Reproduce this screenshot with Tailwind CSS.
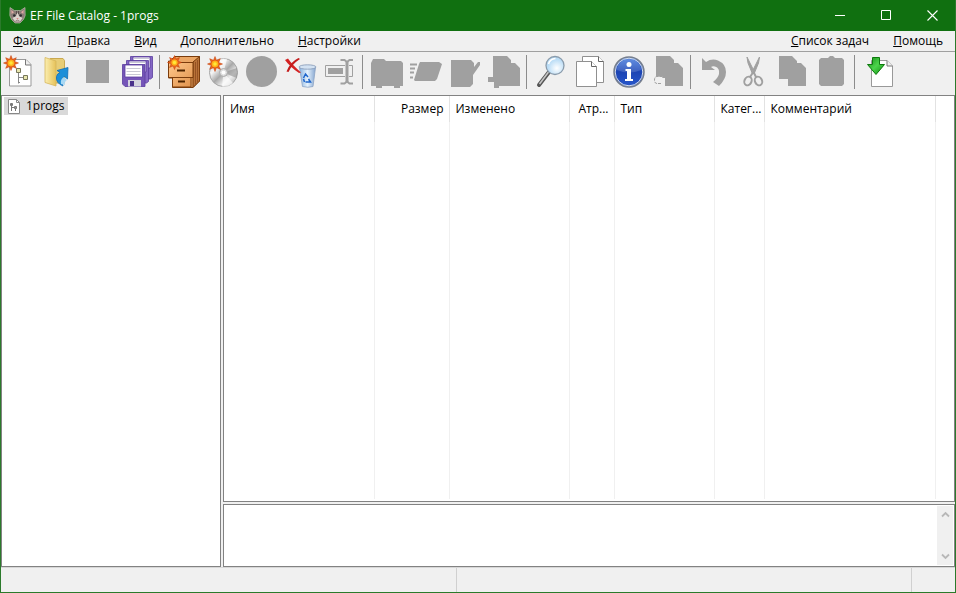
<!DOCTYPE html>
<html lang="ru">
<head>
    <meta charset="UTF-8">
    <meta name="viewport" content="width=device-width, initial-scale=1.0">
    <title>EF File Catalog - 1progs</title>
    <script src="https://cdn.jsdelivr.net/npm/@tailwindcss/browser@4"></script>
</head>
<body class="flex h-screen flex-col overflow-hidden border-x border-b border-[#2b7a2b] bg-[#f0f0f0] font-['Open_Sans','Noto_Sans',sans-serif] text-[12px] leading-4 text-black">

    <!-- shared shapes -->
    <svg class="absolute size-0" aria-hidden="true">
        <defs>
            <symbol id="burst" viewBox="-8 -8 16 16">
                <path d="M0-7.5 1.5-3.7 5.3-5.3 3.7-1.5 7.5 0 3.7 1.5 5.3 5.3 1.5 3.7 0 7.5-1.5 3.7-5.3 5.3-3.7 1.5-7.5 0-3.7-1.5-5.3-5.3-1.5-3.7Z" fill="#e8641a" stroke="#c43c0c" stroke-width=".5"/>
                <circle r="3.3" fill="#ffb31a"/>
                <circle r="1.8" fill="#ffe83a"/>
            </symbol>
            <linearGradient id="folder" x1="0" x2="1">
                <stop offset="0" stop-color="#fbeeb0"/><stop offset="1" stop-color="#e6c259"/>
            </linearGradient>
            <linearGradient id="wood" x1="0" y1="0" x2="1" y2="1">
                <stop offset="0" stop-color="#ffc88c"/><stop offset="1" stop-color="#e0924c"/>
            </linearGradient>
            <linearGradient id="disc" x1="0" y1="0" x2="1" y2="1">
                <stop offset="0" stop-color="#bcbcbc"/><stop offset=".3" stop-color="#f5f5f5"/><stop offset=".5" stop-color="#a8a8a8"/><stop offset=".7" stop-color="#f0f0f0"/><stop offset="1" stop-color="#a0a0a0"/>
            </linearGradient>
            <linearGradient id="info" x1="0" y1="0" x2="0" y2="1">
                <stop offset="0" stop-color="#4a80e0"/><stop offset=".5" stop-color="#1c44b4"/><stop offset="1" stop-color="#2858cc"/>
            </linearGradient>
            <linearGradient id="green" x1="0" y1="0" x2="1" y2="1">
                <stop offset="0" stop-color="#168a16"/><stop offset=".5" stop-color="#4cd44c"/><stop offset="1" stop-color="#0c8c0c"/>
            </linearGradient>
            <linearGradient id="bin" x1="0" x2="1">
                <stop offset="0" stop-color="#8bb4e0"/><stop offset=".5" stop-color="#e4f1fc"/><stop offset="1" stop-color="#86a6d0"/>
            </linearGradient>
            <radialGradient id="lens" cx=".6" cy=".65">
                <stop offset="0" stop-color="#ffffff"/><stop offset="1" stop-color="#b9dcf6"/>
            </radialGradient>
        </defs>
    </svg>

    <header class="-mx-px flex h-[31px] shrink-0 items-center bg-[#107010] pr-px pl-[9px] text-white">
        <svg class="mr-1 size-[17px]" viewBox="0 0 17 17" aria-hidden="true">
            <path d="M1 .5 5.500 3.500h6L16 .5l.2 8-1.700 4-3.500 3.500H6l-3.500-3.500L.8 8.500Z" fill="#8b7d77" stroke="#c9c2ba" stroke-width=".6"/>
            <path d="M2.300 3 5 5.300 2.600 7ZM14.700 3 12 5.300 14.400 7Z" fill="#e2a9a5"/>
            <path d="M8.500 5.500 10 9l3.500 2-2.500 3.500H6L3.500 11 7 9Z" fill="#dcd3cd"/>
            <path d="M7 4h.8v3H7zM9.200 4h.8v3h-.8z" fill="#4d4542"/>
            <circle cx="5.300" cy="8.500" r="1.300" fill="#2b2b30"/><circle cx="11.700" cy="8.500" r="1.300" fill="#2b2b30"/>
            <path d="m7.300 11h2.400l-1.200 1.600Z" fill="#d9827e"/>
            <path d="M6.500 14q2-1.600 4 0" fill="none" stroke="#70605c" stroke-width=".7"/>
        </svg>
        <h1 class="flex-1">EF File Catalog - 1progs</h1>
        <button class="flex h-full w-[46px] items-center justify-center" aria-label="Свернуть">
            <svg class="size-[11px]" viewBox="0 0 11 11"><path d="M0 5.500h10" stroke="#fff"/></svg>
        </button>
        <button class="flex h-full w-[46px] items-center justify-center" aria-label="Развернуть">
            <svg class="size-[11px]" viewBox="0 0 11 11"><path d="M.5 .5h9v9h-9z" fill="none" stroke="#fff"/></svg>
        </button>
        <button class="flex h-full w-[46px] items-center justify-center" aria-label="Закрыть">
            <svg class="size-[11px]" viewBox="0 0 11 11"><path d="m.5.5 10 10m0-10-10 10" stroke="#fff" stroke-width="1.100"/></svg>
        </button>
    </header>

    <nav class="flex h-[21px] shrink-0 items-center gap-6 border-b border-[#a0a0a0] px-3">
        <button><u>Ф</u>айл</button>
        <button><u>П</u>равка</button>
        <button><u>В</u>ид</button>
        <button><u>Д</u>ополнительно</button>
        <button><u>Н</u>астройки</button>
        <button class="ml-auto"><u>С</u>писок задач</button>
        <button><u>П</u>омощь</button>
    </nav>

    <div role="toolbar" class="flex h-[43px] shrink-0 items-start">
        <button class="w-[39px]" aria-label="Новый каталог">
            <svg viewBox="0 0 39 40">
                <path d="M8.500 7.500H25l5 5v21.500H8.500Z" fill="#fff" stroke="#999"/>
                <path d="M24.500 7.500v5.500H30" fill="#eee" stroke="#777"/>
                <path d="M17.500 20v11.500M17.500 25.500H22M17.500 30.500H19" fill="none" stroke="#888"/>
                <path d="M15.500 16.500h4v4h-4zM22.500 23.500h4v4h-4z" fill="#e8e6ae" stroke="#77775a"/>
                <use href="#burst" x="2" y="3" width="16" height="16"/>
            </svg>
        </button>
        <button class="w-[39px]" aria-label="Открыть">
            <svg viewBox="0 0 39 40">
                <path d="M10 6.500h13l1.500 2V31H10Z" fill="#e8cd76" stroke="#c9a850"/>
                <path d="M5 5.500 16 9v25L5 30.500Z" fill="url(#folder)" stroke="#d5b65c" stroke-width=".8"/>
                <path d="M17 18.500 28 15.500 27.500 27 24.500 24.500Q20 27 23 34 15.500 31 16.500 24.500 17 21.500 20 20.500Z" fill="#1d8fd8" stroke="#106cb4" stroke-width=".8"/>
                <path d="M21 32q-1-5 3-7l3 3q-3 2-2 5Z" fill="#a8d8f4"/>
            </svg>
        </button>
        <button class="w-[39px]" aria-label="Закрыть каталог" disabled>
            <svg viewBox="0 0 39 40"><path d="M7 8h23v23H7z" fill="#a0a0a0"/></svg>
        </button>
        <button class="w-[39px]" aria-label="Сохранить все">
            <svg viewBox="0 0 39 40">
                <g stroke="#5a3d9e" stroke-width=".8">
                    <path d="M12.500 4.500h22v21l-2 1.500h-20Z" fill="#8467c4"/><path d="M15 5h17v11H15z" fill="#fff"/>
                    <path d="M8.500 8.500h22v21l-2 1.500h-20Z" fill="#8467c4"/><path d="M11 9h17v11H11z" fill="#fff"/>
                    <path d="M4.500 12.500h22.500v22H7l-2.500-2.500Z" fill="#7555b8"/><path d="M7 13h17.500v12H7z" fill="#fff"/>
                </g>
                <path d="M8.500 16.500h14M8.500 19.500h14M8.500 22.500h14M16 6.500h15M12 10.500h15" stroke="#c9c9d4"/>
                <path d="M10 28h13v6.500H10z" fill="#d4d4de"/><path d="M12 29h4v5h-4z" fill="#49318a"/>
            </svg>
        </button>
        <span class="mr-[5px] ml-[2px] mt-[3px] h-[34px] w-px bg-[#8c8c8c]"></span>

        <button class="w-[39px]" aria-label="Добавить том">
            <svg viewBox="0 0 39 40">
                <path d="M4.500 9 10 4.500h24.500V29L28 35.500H7.500V26h-4V9Z" fill="#eba766" stroke="#7a3c0c"/>
                <path d="m28 10 6.500-5.500V29L28 35.500Z" fill="#b87238" stroke="#7a3c0c"/>
                <path d="M7.500 25.500H26v9.500H7.500ZM3.500 10.500h24.500v15H3.500Z" fill="url(#wood)" stroke="#7a3c0c"/>
                <path d="M12 18.500h8M13 29.500h7" stroke="#4f2400" stroke-width="2"/>
                <path d="M30.500 10v22M32.500 8v22" stroke="#87451a" stroke-width=".7"/>
                <use href="#burst" x="2" y="3" width="15" height="15"/>
            </svg>
        </button>
        <button class="w-[39px]" aria-label="Добавить диск">
            <svg viewBox="0 0 39 40">
                <circle cx="19.500" cy="20.500" r="14" fill="url(#disc)" stroke="#a5a5a5"/>
                <path d="M19.500 20.500 12 8.500q5-3 11-1.500ZM19.500 20.500 29 31q-5 4.500-11 3.500Z" fill="#fff" opacity=".65"/>
                <path d="M19.500 20.500 33 16q1.500 5-.5 10Z" fill="#8f8f8f" opacity=".6"/>
                <circle cx="19.500" cy="20.500" r="4" fill="#ddd" stroke="#aaa"/><circle cx="19.500" cy="20.500" r="2" fill="#fff"/>
                <use href="#burst" x="3" y="4" width="16" height="16"/>
            </svg>
        </button>
        <button class="w-[39px]" aria-label="Остановить" disabled>
            <svg viewBox="0 0 39 40"><circle cx="18.500" cy="19.500" r="15.500" fill="#a0a0a0"/></svg>
        </button>
        <button class="w-[39px]" aria-label="Удалить">
            <svg viewBox="0 0 39 40">
                <path d="M17.500 15.500h16L31 34.500q-5 1.500-10.500 0Z" fill="url(#bin)" stroke="#8ba3c4" stroke-width=".8"/>
                <ellipse cx="25.500" cy="15" rx="8.500" ry="2.200" fill="#d3e2f2" stroke="#8296b4" stroke-width=".8"/>
                <path d="m21.500 26 2-4 2.500 3M26.500 27l2 3h-5m-2-3 1 3" fill="none" stroke="#1f66cc" stroke-width="1.500"/>
                <path d="M3 8 6 6.500q4 6 13 14L17 21Q8 15 3 8Z" fill="#d42222"/>
                <path d="M16.500 6 18 7Q10 12 6.500 20L4.500 19.500Q8 10 16.500 6Z" fill="#c41c1c"/>
            </svg>
        </button>
        <button class="w-[39px]" aria-label="Переименовать" disabled>
            <svg viewBox="0 0 39 40" fill="none" stroke="#a0a0a0">
                <path d="M24 13.500H4.500v11H24M28 13.500h3.500v11H28"/>
                <path d="M7 16h15v6H7z" fill="#a0a0a0" stroke="none"/>
                <path d="M19.500 8h4l2.500 2 2.500-2h3.500M26 9v21M19.500 31.500h4l2.500-2 2.500 2h3.500" stroke-width="2"/>
                <path d="M26 9v22" stroke-width="3"/>
            </svg>
        </button>
        <span class="mr-[5px] ml-[2px] mt-[3px] h-[34px] w-px bg-[#8c8c8c]"></span>

        <button class="w-[39px]" aria-label="Открыть папку" disabled>
            <svg viewBox="0 0 39 40"><path d="M5 7h11l2 2h15l2 2v23h-3v2h-6v-2H14v2H8v-2H3V11Z" fill="#a0a0a0"/></svg>
        </button>
        <button class="w-[39px]" aria-label="Запустить" disabled>
            <svg viewBox="0 0 39 40">
                <path d="M13 10h19l3 2-5 15-2 2H8l-1-1 5-16Z" fill="#a0a0a0"/>
                <path d="M3 12.500h7M3 16.500h5M3 20.500h4M3 25.500h3" stroke="#a0a0a0" stroke-width="2"/>
            </svg>
        </button>
        <button class="w-[39px]" aria-label="Изменить" disabled>
            <svg viewBox="0 0 39 40"><path d="M5 8h20l3 3v4l4-5h2v3l-7 10v9l-3 3H5Z" fill="#a0a0a0"/></svg>
        </button>
        <button class="w-[39px]" aria-label="Копировать в" disabled>
            <svg viewBox="0 0 39 40"><path d="M8 4h14l4 4v3h4l5 5v18H14v2H9v-6H3v-5h5Z" fill="#a0a0a0"/></svg>
        </button>
        <span class="mr-[5px] ml-[2px] mt-[3px] h-[34px] w-px bg-[#8c8c8c]"></span>

        <button class="w-[39px]" aria-label="Поиск">
            <svg viewBox="0 0 39 40">
                <path d="m17 20-10 13" stroke="#555" stroke-width="4" stroke-linecap="round"/>
                <path d="m16.500 20-9 12" stroke="#c6c6c6" stroke-width="1.500"/>
                <circle cx="23" cy="13.500" r="9" fill="url(#lens)" stroke="#8a9bab" stroke-width="1.300"/>
                <path d="M16.500 12q1.500-5 7-5.500" fill="none" stroke="#fff" stroke-width="1.500"/>
            </svg>
        </button>
        <button class="w-[39px]" aria-label="Дубликаты">
            <svg viewBox="0 0 39 40" fill="#fff" stroke="#909090">
                <path d="M11.500 4.500h16l5 5v21h-21Z"/><path d="M27.500 4.500v5h5" stroke="#666"/>
                <path d="M5.500 9.500h15l5 5v20h-20Z"/><path d="M20.500 9.500v5h5" stroke="#666"/>
            </svg>
        </button>
        <button class="w-[39px]" aria-label="Сведения">
            <svg viewBox="0 0 39 40">
                <circle cx="19" cy="20" r="15" fill="url(#info)" stroke="#777f8c" stroke-width="1.500"/>
                <circle cx="19" cy="20" r="13.800" fill="none" stroke="#d7deea"/>
                <path d="M7 18a12 11 0 0 1 24 0q-12 5-24 0Z" fill="#fff" opacity=".15"/>
                <circle cx="19" cy="12.500" r="2.500" fill="#fff"/>
                <path d="M15.500 17H21v10h2v2h-8v-2h2v-8h-1.500Z" fill="#fff"/>
            </svg>
        </button>
        <button class="w-[39px]" aria-label="Переместить" disabled>
            <svg viewBox="0 0 39 40">
                <path d="M7 4h14l4 4v3h4l5 5v18H16v-8H7Z" fill="#a0a0a0"/>
                <path d="M13.500 24.500H8q-2.500 0-2.500 3.500T8 31.500h4" fill="#f0f0f0" stroke="#a0a0a0" stroke-dasharray="3 1"/>
            </svg>
        </button>
        <span class="mr-[5px] ml-[2px] mt-[3px] h-[34px] w-px bg-[#8c8c8c]"></span>

        <button class="w-[39px]" aria-label="Отменить" disabled>
            <svg viewBox="0 0 39 40"><path d="M6 6 10 10Q16 6 22 8.500 30 12 30 20 30 27 23 34L17 30Q22 26 23 22 24 16 19 14.500 16.500 14 15 15L19 18H6Z" fill="#a0a0a0"/></svg>
        </button>
        <button class="w-[39px]" aria-label="Вырезать" disabled>
            <svg viewBox="0 0 39 40">
                <path d="M12 5 13 11 17.500 22 19.500 20ZM24.500 5 23.500 11 19 22 17 20Z" fill="#a0a0a0" stroke="#a0a0a0"/>
                <path d="m18 19 3 6m-2-6-4 6" stroke="#a0a0a0" stroke-width="2"/>
                <ellipse cx="13" cy="29" rx="3.500" ry="4.500" fill="none" stroke="#a0a0a0" stroke-width="2" transform="rotate(25 13 29)"/>
                <ellipse cx="23.500" cy="29" rx="3.500" ry="4.500" fill="none" stroke="#a0a0a0" stroke-width="2" transform="rotate(-25 23.500 29)"/>
            </svg>
        </button>
        <button class="w-[39px]" aria-label="Копировать" disabled>
            <svg viewBox="0 0 39 40"><path d="M5 4h13l5 5v2h4l5 5v18H14v-7H5Z" fill="#a0a0a0"/></svg>
        </button>
        <button class="w-[39px]" aria-label="Вставить" disabled>
            <svg viewBox="0 0 39 40"><path d="M8 6h7l2-2h3l2 2h7l2 2v24l-2 2H8l-2-2V8Z" fill="#a0a0a0"/></svg>
        </button>
        <span class="mr-[5px] ml-[2px] mt-[3px] h-[34px] w-px bg-[#8c8c8c]"></span>

        <button class="w-[39px]" aria-label="Импорт">
            <svg viewBox="0 0 39 40">
                <path d="M11.500 8.500H27l5.500 5.500v20.500h-21Z" fill="#fff" stroke="#999"/>
                <path d="M27 8.500v5.500h5.500" fill="#eee" stroke="#777"/>
                <path d="M12.500 5.500h7v7h5L16 22.500 7.500 12.500h5Z" fill="url(#green)" stroke="#0d7a0d"/>
            </svg>
        </button>
    </div>

    <main class="flex min-h-0 flex-1 gap-[2px]">
        <aside class="w-[220px] shrink-0 border border-[#828282] bg-white">
            <ul>
                <li class="flex">
                    <a href="#" class="ml-[2px] mt-px flex h-[18px] items-center gap-1 bg-[#d9d9d9] px-[3px]">
                        <svg class="size-[15px]" viewBox="0 0 15 15" fill="none" stroke="#888">
                            <path d="M1.500 .5h8l3 3v11h-11Z" fill="#fff"/><path d="M9.500 .5v3h3"/>
                            <path d="M4.500 5v7M4.500 8.500h4V12" stroke="#777"/><path d="M3.500 4.500h2v2h-2zM7.500 7.500h2v2h-2z" stroke="#777"/>
                        </svg>
                        1progs
                    </a>
                </li>
            </ul>
        </aside>

        <div class="flex min-w-0 flex-1 flex-col gap-[2px]">
            <section class="min-h-0 flex-1 border border-[#828282] bg-white pb-[2px]">
                <table class="h-full w-full table-fixed">
                    <thead>
                        <tr class="h-[26px] *:overflow-hidden *:border-r *:border-[#e2e2e2] *:pr-[5px] *:pl-[6px] *:text-left *:font-normal *:whitespace-nowrap">
                            <th class="w-[150px]">Имя</th>
                            <th class="w-[75px]"><span class="block text-right">Размер</span></th>
                            <th class="w-[120px]">Изменено</th>
                            <th class="w-[45px]"><span class="block text-right">Атр...</span></th>
                            <th class="w-[100px]">Тип</th>
                            <th class="w-[50px]">Катег...</th>
                            <th class="w-[171px]">Комментарий</th>
                            <td class="border-r-0!"></td>
                        </tr>
                    </thead>
                    <tbody>
                        <tr class="*:border-r *:border-[#f0f0f0]">
                            <td></td><td></td><td></td><td></td><td></td><td></td><td></td><td class="border-r-0!"></td>
                        </tr>
                    </tbody>
                </table>
            </section>

            <section class="flex h-[63px] shrink-0 border border-[#828282] bg-white">
                <textarea class="min-w-0 flex-1 resize-none p-1 outline-none" aria-label="Описание" readonly></textarea>
                <div class="my-px mr-px flex w-4 flex-col justify-between bg-[#f0f0f0]">
                    <button class="flex h-[17px] items-center justify-center" aria-label="Вверх">
                        <svg class="size-[9px]" viewBox="0 0 9 9"><path d="m1 6.500 3.500-3.500L8 6.500" fill="none" stroke="#b8b8b8" stroke-width="1.800"/></svg>
                    </button>
                    <button class="flex h-[17px] items-center justify-center" aria-label="Вниз">
                        <svg class="size-[9px]" viewBox="0 0 9 9"><path d="m1 2.500 3.500 3.500L8 2.500" fill="none" stroke="#b8b8b8" stroke-width="1.800"/></svg>
                    </button>
                </div>
            </section>
        </div>
    </main>

    <footer class="flex h-[25px] shrink-0 border-t border-[#d7d7d7]">
        <div class="w-[456px] border-r border-[#d0d0d0]"></div>
        <div class="flex-1 border-r border-[#d0d0d0]"></div>
        <div class="w-[43px]"></div>
    </footer>

</body>
</html>
